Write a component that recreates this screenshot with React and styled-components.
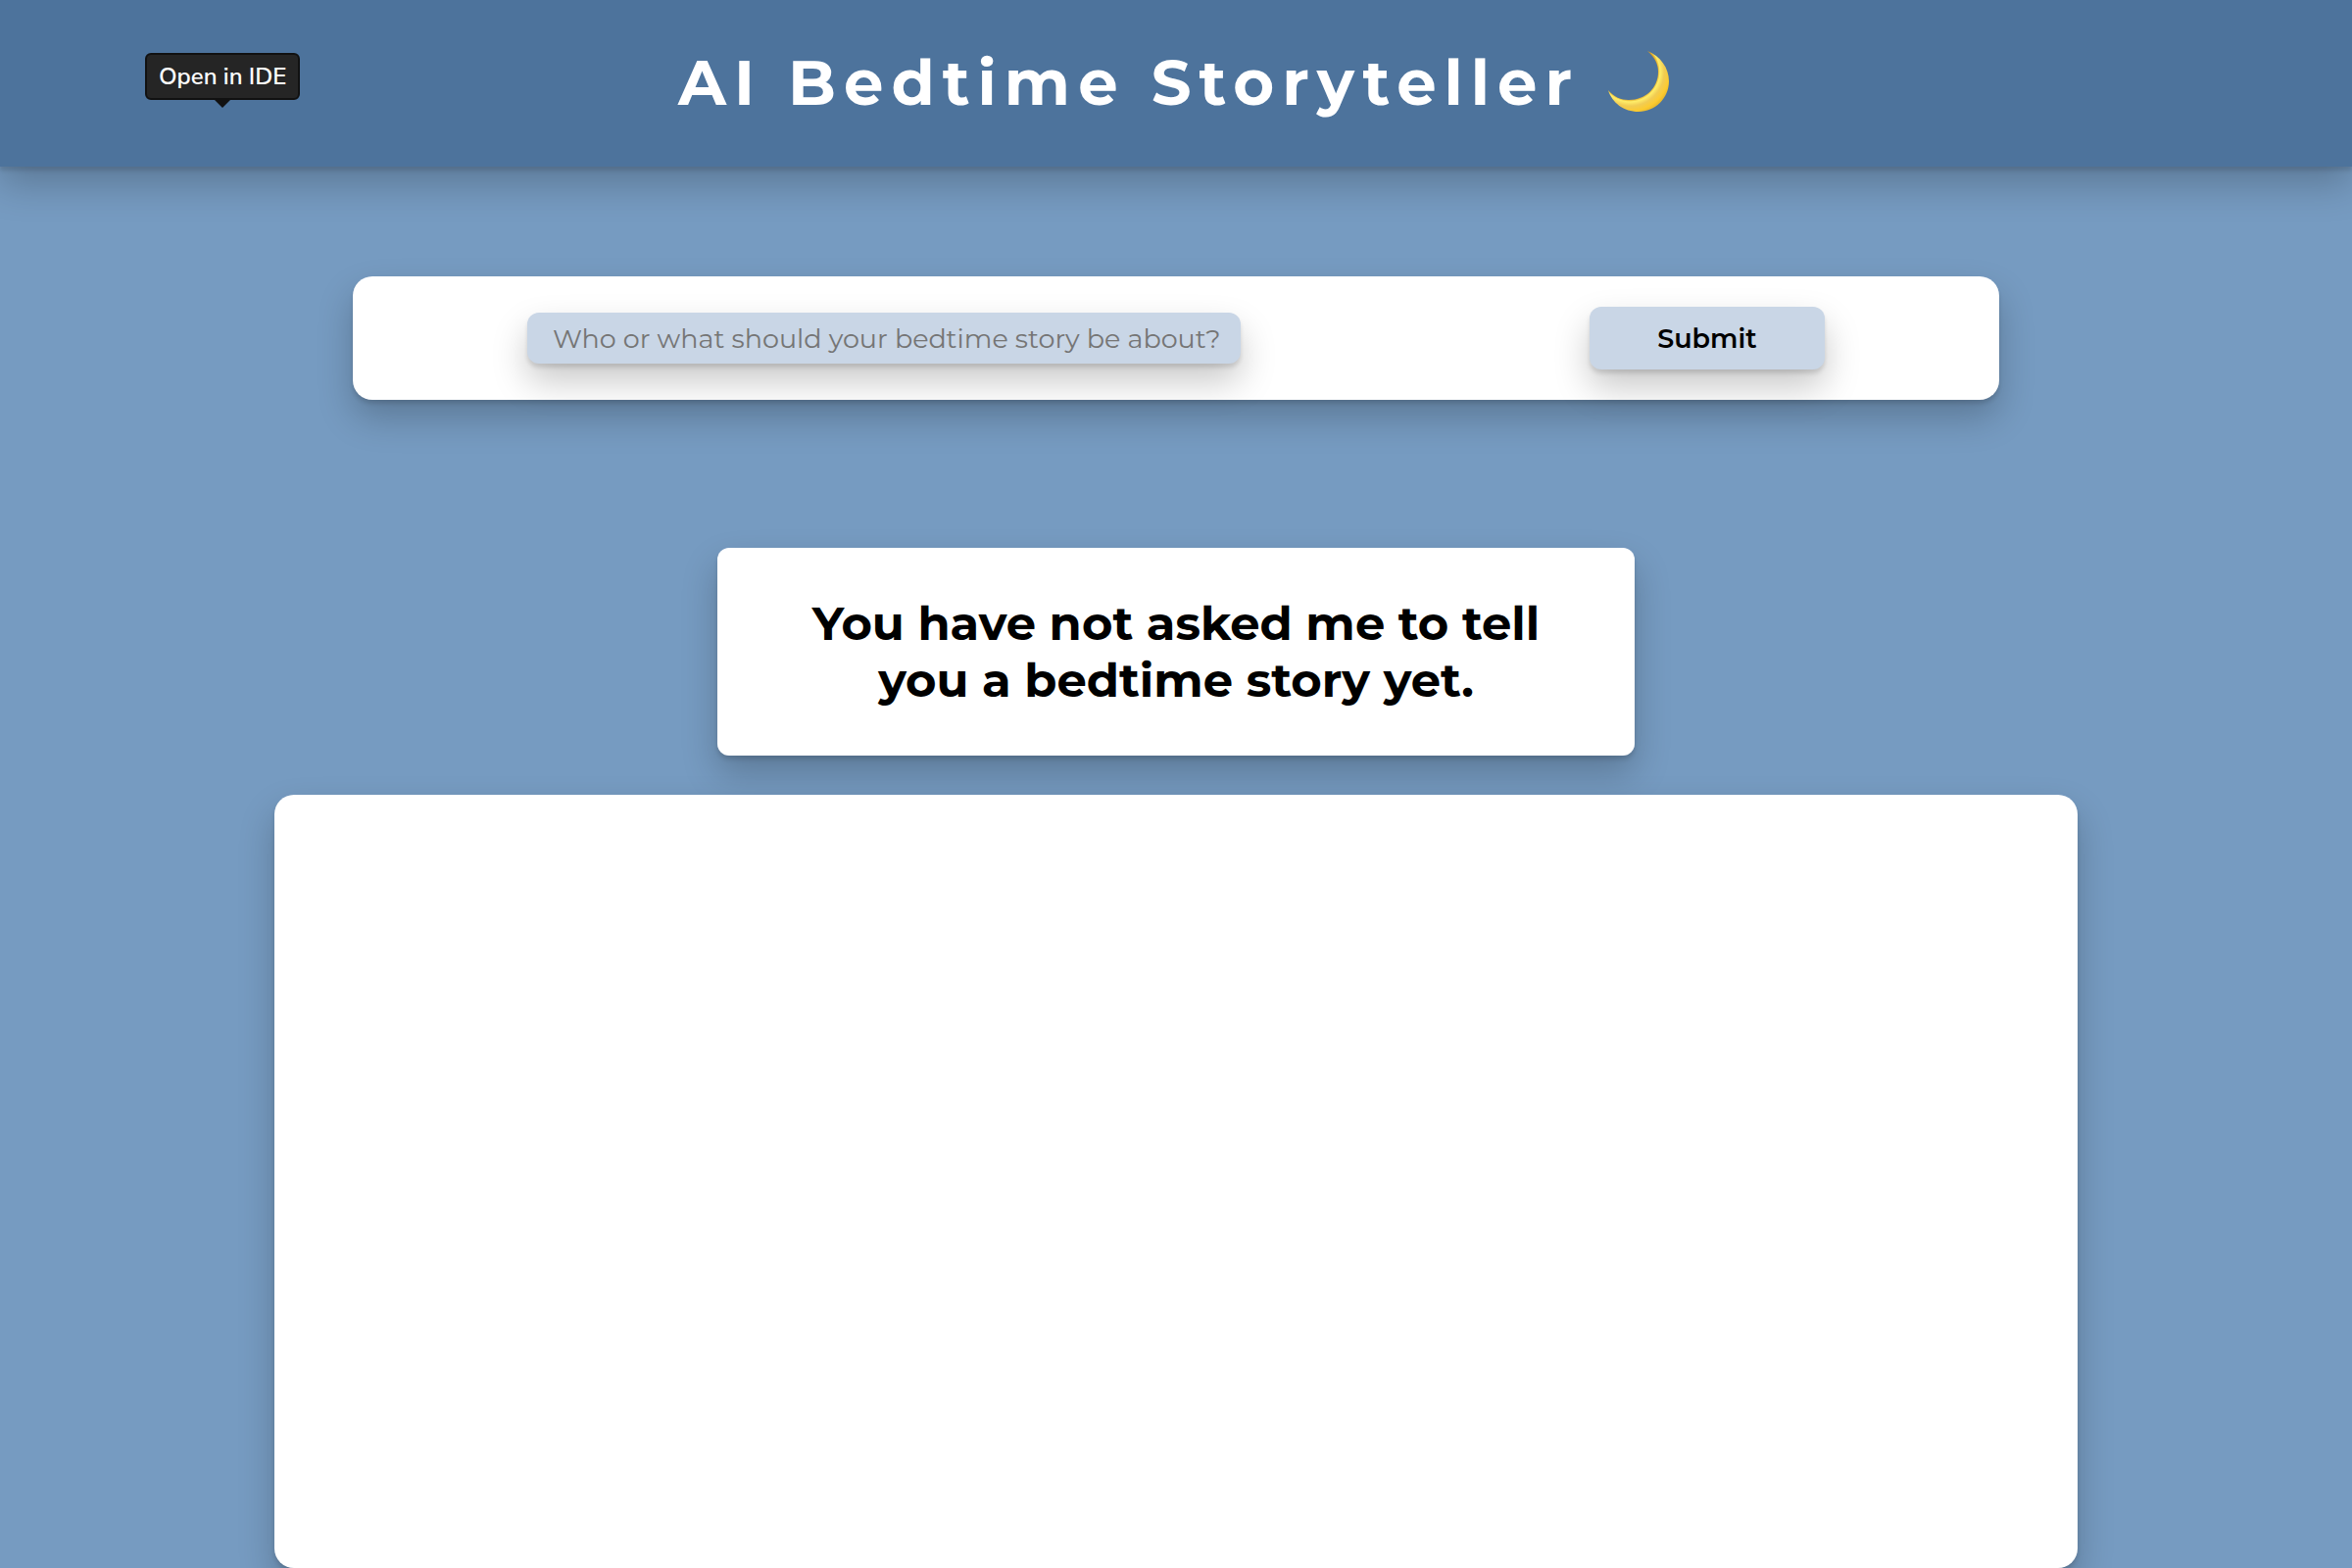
import React, { useState } from "react";
import styled, { createGlobalStyle, css } from "styled-components";

const GlobalStyle = createGlobalStyle`
  *, *::before, *::after { box-sizing: border-box; }
  body {
    margin: 0;
    background: #769bc1;
    color: #000;
    font-family: Montserrat, Inter, "Open Sans", sans-serif;
  }
`;

const raised = css`
  box-shadow:
    0 4px 4px rgba(0, 0, 0, 0.12),
    0 18px 36px rgba(0, 0, 0, 0.22);
`;

const Header = styled.header`
  position: relative;
  display: flex;
  justify-content: center;
  align-items: center;
  gap: 24px;
  padding: 42px 32px 44px;
  background: #4d739c;
  ${raised}
`;

const Title = styled.h1`
  margin: 0;
  color: #fff;
  font-size: 64px;
  line-height: 84px;
  font-weight: 700;
  letter-spacing: 8px;
`;

const Moon = styled.svg`
  width: 72px;
  height: 72px;
`;

const Tooltip = styled.div`
  position: absolute;
  top: 54px;
  left: 148px;
  padding: 6px 12px;
  border: 2px solid #111;
  border-radius: 6px;
  background: #252525;
  color: #fff;
  font-family: "Nunito Sans", Nunito, "Noto Sans", sans-serif;
  font-size: 24px;
  line-height: 32px;
  font-weight: 600;
  &::after {
    content: "";
    position: absolute;
    top: 100%;
    left: 50%;
    margin-left: -10px;
    border: 10px solid transparent;
    border-top-color: #111;
    border-bottom: 0;
  }
`;

const Main = styled.main`
  display: flex;
  flex-direction: column;
  align-items: center;
  padding-top: 112px;
`;

const Form = styled.form`
  display: flex;
  justify-content: space-around;
  align-items: center;
  width: 70%;
  padding: 31px 0;
  border-radius: 20px;
  background: #fff;
  ${raised}
`;

const StoryInput = styled.input`
  width: 728px;
  height: 52px;
  padding: 0 16px 0 26px;
  border: 0;
  border-radius: 12px;
  background: #c9d6e6;
  font-family: inherit;
  font-size: 27px;
  ${raised}
  &::placeholder { color: #757575; opacity: 1; }
`;

const Submit = styled.button`
  width: 240px;
  height: 64px;
  border: 0;
  border-radius: 12px;
  background: #c9d6e6;
  color: #000;
  font-family: inherit;
  font-size: 27px;
  font-weight: 600;
  ${raised}
`;

const Prompt = styled.section`
  width: 936px;
  max-width: 100%;
  margin: 151px 0 40px;
  padding: 48px 80px;
  border-radius: 12px;
  background: #fff;
  text-align: center;
  ${raised}
`;

const PromptText = styled.h2`
  margin: 0;
  font-size: 48px;
  line-height: 58px;
  font-weight: 700;
`;

const Story = styled.article`
  width: 1840px;
  max-width: 100%;
  min-height: calc(100vh - 811px);
  border-radius: 20px;
  background: #fff;
  ${raised}
`;

export default function App() {
  const [topic, setTopic] = useState("");
  return (
    <>
      <GlobalStyle />
      <Header>
        <Tooltip role="tooltip">Open in IDE</Tooltip>
        <Title>AI Bedtime Storyteller</Title>
        <Moon viewBox="0 0 72 72" role="img" aria-label="Crescent moon">
          <defs>
            <radialGradient id="moon" gradientUnits="userSpaceOnUse" cx="27" cy="25" r="44">
              <stop offset="0.64" stopColor="#d99a1c" />
              <stop offset="0.7" stopColor="#ffee68" />
              <stop offset="0.8" stopColor="#f1cc54" />
              <stop offset="0.92" stopColor="#fccb30" />
              <stop offset="1" stopColor="#e9b92d" />
            </radialGradient>
          </defs>
          <path d="M45 4C58 9 67 21 67 35C67 52 53 66 36 66C21 66 9 57 5 44C11 51 18 54 26 54C43 54 56 42 56 25C56 17 52 10 45 4Z" fill="url(#moon)" />
        </Moon>
      </Header>
      <Main>
        <Form onSubmit={(event) => event.preventDefault()}>
          <StoryInput
            aria-label="Story topic"
            placeholder="Who or what should your bedtime story be about?"
            value={topic}
            onChange={(event) => setTopic(event.target.value)}
          />
          <Submit type="submit">Submit</Submit>
        </Form>
        <Prompt>
          <PromptText>You have not asked me to tell you a bedtime story yet.</PromptText>
        </Prompt>
        <Story aria-label="Story" />
      </Main>
    </>
  );
}
